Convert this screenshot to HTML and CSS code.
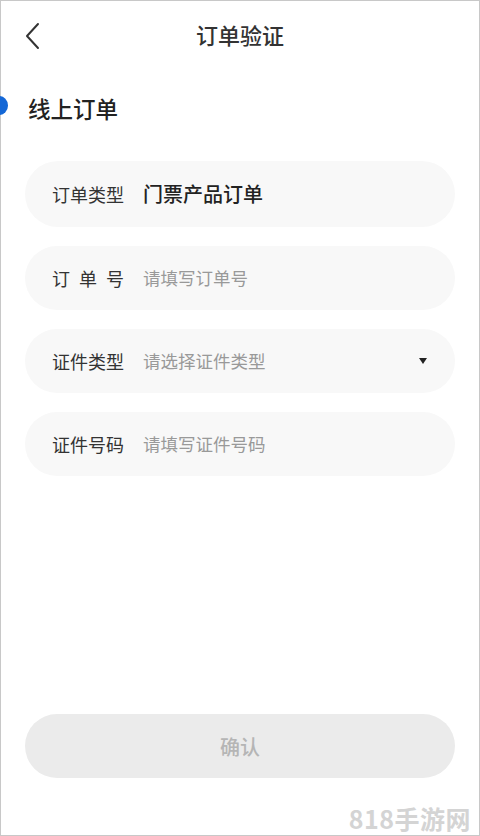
FILE: index.html
```html
<!DOCTYPE html>
<html lang="zh-CN">
<head>
    <meta charset="UTF-8">
    <meta name="viewport" content="width=device-width, initial-scale=1.0">
    <title>订单验证</title>
    <link rel="stylesheet" href="styles.css">
</head>
<body>

<div class="page">
    <div class="header">
        <svg class="back" width="20" height="30" viewBox="0 0 20 30">
            <path d="M14 3 L3 15 L14 27" fill="none" stroke="#333" stroke-width="2" stroke-linecap="round" stroke-linejoin="round"/>
        </svg>
        <div class="title">订单验证</div>
    </div>

    <div class="section">
        <span class="dot"></span>
        <span class="section-title">线上订单</span>
    </div>

    <div class="form">
        <div class="field field-first">
            <span class="label">订单类型</span>
            <span class="value">门票产品订单</span>
        </div>
        <div class="field">
            <span class="label">订 单 号</span>
            <span class="placeholder">请填写订单号</span>
        </div>
        <div class="field">
            <span class="label">证件类型</span>
            <span class="placeholder">请选择证件类型</span>
            <span class="arrow"></span>
        </div>
        <div class="field">
            <span class="label">证件号码</span>
            <span class="placeholder">请填写证件号码</span>
        </div>
    </div>

    <div class="footer">
        <button class="confirm">确认</button>
    </div>

    <div class="watermark">818手游网</div>
</div>

</body>
</html>
```

FILE: styles.css
```css
body {
    margin: 0;
    font-family: "Noto Sans CJK SC", "Noto Sans", sans-serif;
    background: #fff;
}
.page {
    position: relative;
    width: 480px;
    height: 836px;
    box-sizing: border-box;
    border: 1px solid #c8c8c8;
    display: flex;
    flex-direction: column;
    background: #fff;
}
.header {
    position: relative;
    height: 66px;
    display: flex;
    align-items: center;
    justify-content: center;
}
.back {
    position: absolute;
    left: 23px;
    top: 20px;
}
.title {
    font-size: 22px;
    line-height: 30px;
    color: #333;
    font-weight: 500;
}
.section {
    display: flex;
    align-items: center;
    height: 40px;
    margin-top: 21px;
    margin-bottom: 33px;
}
.dot {
    width: 18px;
    height: 19px;
    border-radius: 50%;
    background: #1467d6;
    margin-left: -11px;
    margin-top: -5px;
    flex-shrink: 0;
}
.section-title {
    margin-left: 20px;
    font-size: 22.5px;
    line-height: 30px;
    color: #222;
    font-weight: 500;
}
.form {
    padding: 0 24px;
    display: flex;
    flex-direction: column;
    gap: 19px;
}
.field {
    display: flex;
    align-items: center;
    height: 64px;
    border-radius: 32px;
    background: #f8f8f8;
    padding: 0 28px 0 27px;
}
.field-first {
    height: 66px;
    border-radius: 33px;
}
.label {
    width: 72px;
    font-size: 18px;
    line-height: 24px;
    color: #333;
    text-align: justify;
    text-align-last: justify;
    flex-shrink: 0;
}
.value {
    margin-left: 19px;
    font-size: 20px;
    line-height: 26px;
    font-weight: 500;
    color: #222;
}
.placeholder {
    margin-left: 19px;
    font-size: 17.5px;
    line-height: 24px;
    color: #999;
}
.arrow {
    margin-left: auto;
    width: 0;
    height: 0;
    border-left: 4px solid transparent;
    border-right: 4px solid transparent;
    border-top: 6px solid #222;
}
.footer {
    margin-top: auto;
    padding: 0 24px 57px;
}
.confirm {
    display: block;
    width: 100%;
    height: 64px;
    border: none;
    border-radius: 32px;
    background: #ebebeb;
    color: #b5b5b5;
    font-family: "Noto Sans CJK SC", "Noto Sans", sans-serif;
    font-size: 20px;
    font-weight: 500;
}
.watermark {
    position: absolute;
    right: 8px;
    bottom: 0;
    font-size: 25px;
    line-height: 34px;
    font-weight: 700;
    color: #d4d4d4;
    letter-spacing: 0.5px;
}
```
